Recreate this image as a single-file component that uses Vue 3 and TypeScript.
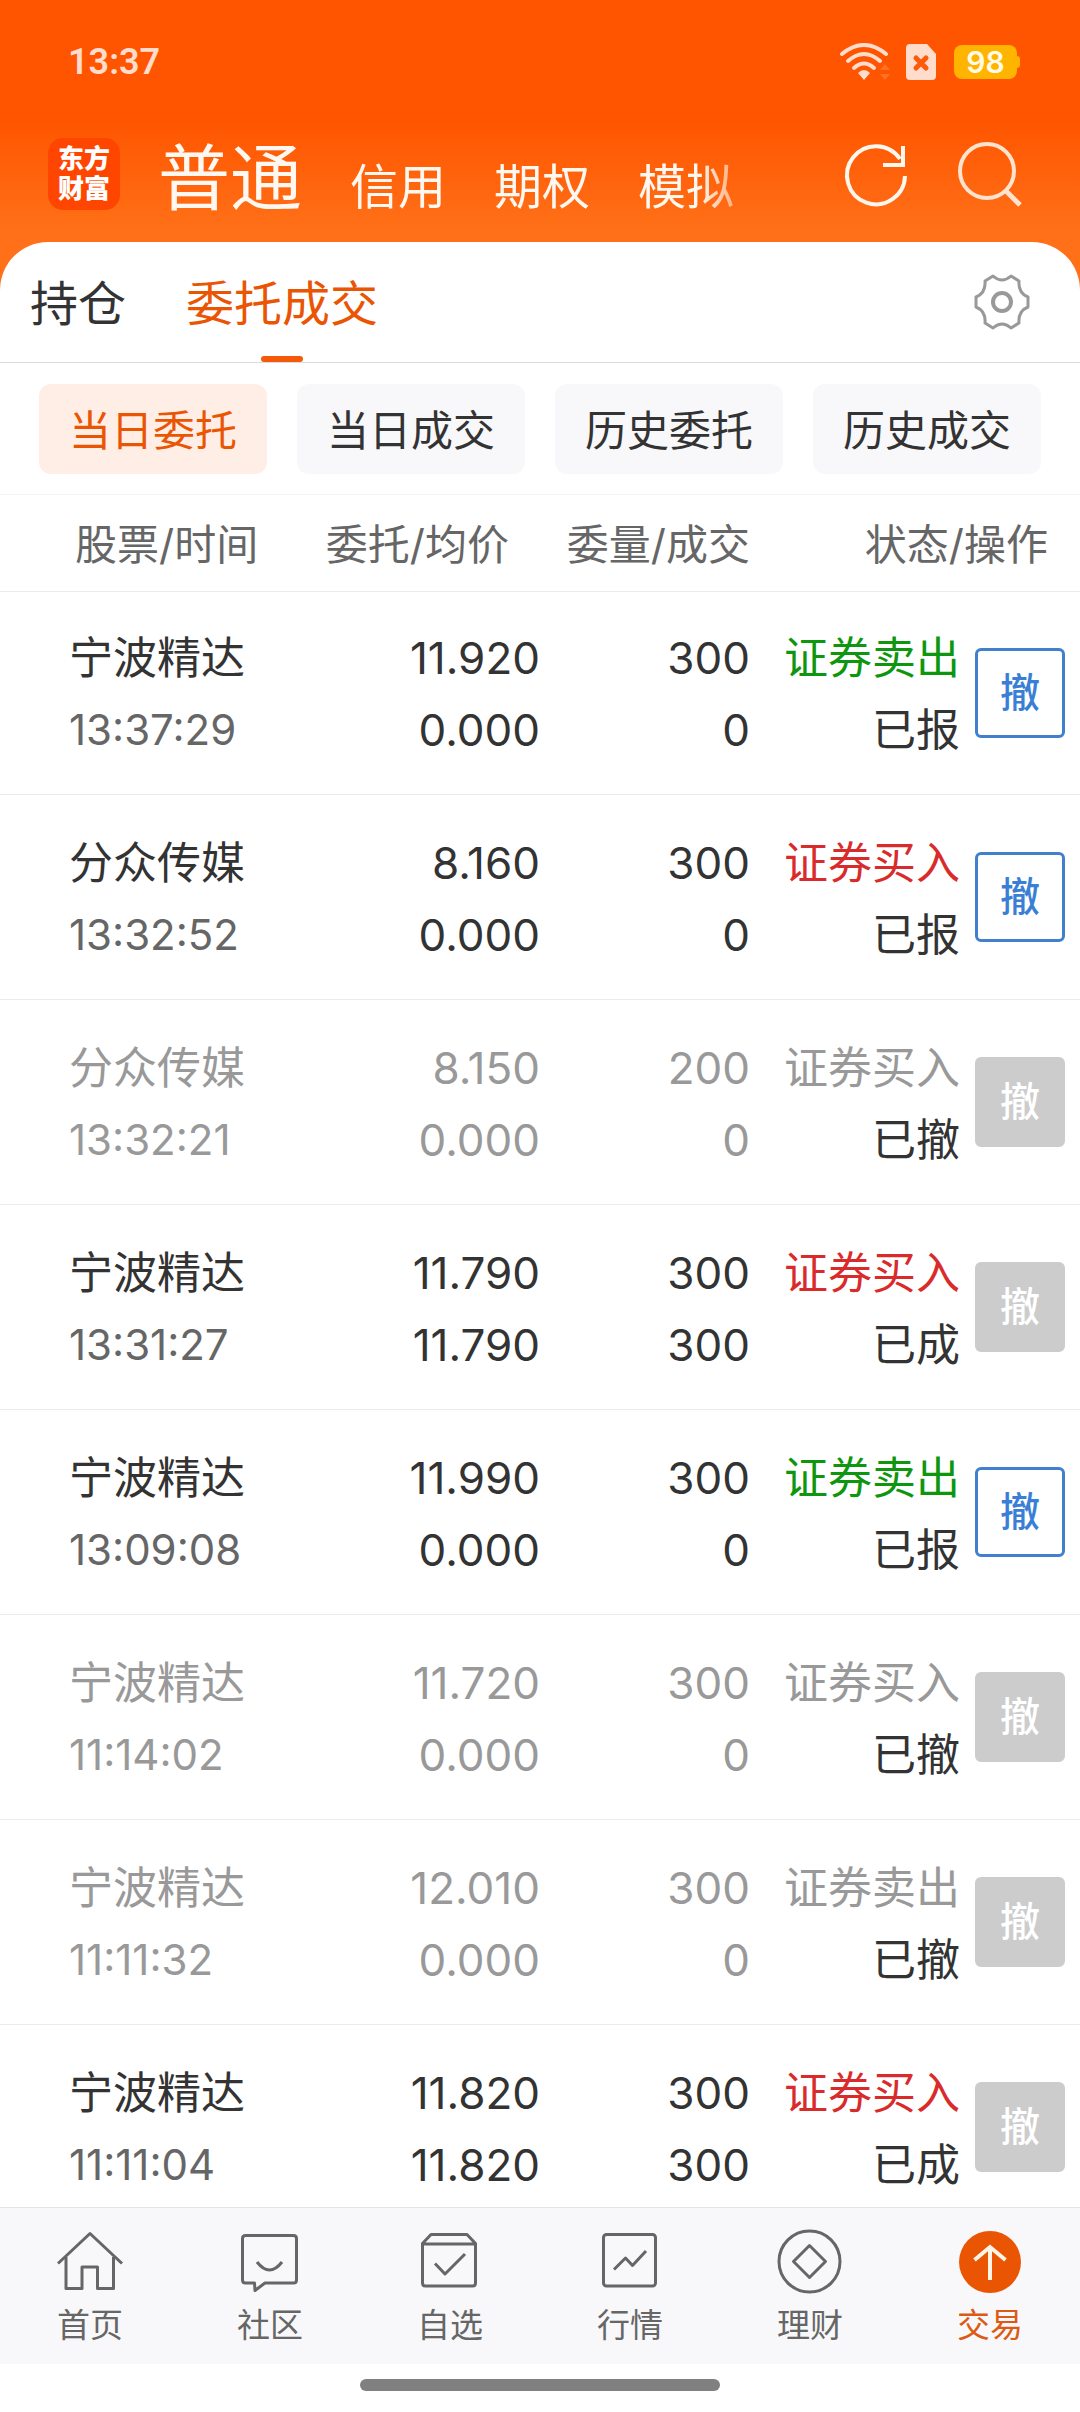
<script setup lang="ts">
import { ref } from 'vue'

type Side = 'buy' | 'sell'
type State = '已报' | '已撤' | '已成'

interface Order {
  name: string
  time: string
  price: string
  average: string
  amount: number
  filled: number
  side: Side
  state: State
}

const modes = ['普通', '信用', '期权', '模拟']
const tabs = ['持仓', '委托成交']
const filters = ['当日委托', '当日成交', '历史委托', '历史成交']
const navItems = [
  { id: 'home', label: '首页' },
  { id: 'community', label: '社区' },
  { id: 'watch', label: '自选' },
  { id: 'market', label: '行情' },
  { id: 'wealth', label: '理财' },
  { id: 'trade', label: '交易' },
]

const mode = ref('普通')
const tab = ref('委托成交')
const filter = ref('当日委托')
const page = ref('trade')

const orders: Order[] = [
  { name: '宁波精达', time: '13:37:29', price: '11.920', average: '0.000', amount: 300, filled: 0, side: 'sell', state: '已报' },
  { name: '分众传媒', time: '13:32:52', price: '8.160', average: '0.000', amount: 300, filled: 0, side: 'buy', state: '已报' },
  { name: '分众传媒', time: '13:32:21', price: '8.150', average: '0.000', amount: 200, filled: 0, side: 'buy', state: '已撤' },
  { name: '宁波精达', time: '13:31:27', price: '11.790', average: '11.790', amount: 300, filled: 300, side: 'buy', state: '已成' },
  { name: '宁波精达', time: '13:09:08', price: '11.990', average: '0.000', amount: 300, filled: 0, side: 'sell', state: '已报' },
  { name: '宁波精达', time: '11:14:02', price: '11.720', average: '0.000', amount: 300, filled: 0, side: 'buy', state: '已撤' },
  { name: '宁波精达', time: '11:11:32', price: '12.010', average: '0.000', amount: 300, filled: 0, side: 'sell', state: '已撤' },
  { name: '宁波精达', time: '11:11:04', price: '11.820', average: '11.820', amount: 300, filled: 300, side: 'buy', state: '已成' },
]
</script>

<template>
  <div class="app">
    <header class="top">
      <div class="status">
        <span class="clock">13:37</span>
        <div class="signals">
          <svg class="wifi" width="52" height="38" viewBox="0 0 52 38" aria-hidden="true">
            <g fill="none" stroke="#ffdccb" stroke-width="4" stroke-linecap="round">
              <path d="M3 11Q25 -7 47 11" />
              <path d="M9 18Q25 4 41 18" />
              <path d="M15 25Q25 16 35 25" />
            </g>
            <path d="M25 37L19 30Q25 24 31 30Z" fill="#ffdccb" />
            <path d="M41 27L46 21L51 27ZM41 31L46 37L51 31Z" fill="#ff7226" />
          </svg>
          <svg class="sim" width="30" height="36" viewBox="0 0 30 36" aria-hidden="true">
            <path d="M4 0H21L30 10V32Q30 36 26 36H4Q0 36 0 32V4Q0 0 4 0Z" fill="#ffdccb" />
            <path d="M10 14L20 24M20 14L10 24" stroke="#ff5a0a" stroke-width="5" stroke-linecap="round" />
          </svg>
          <span class="battery">98</span>
        </div>
      </div>
      <div class="bar">
        <div class="logo"><span>东方</span><span>财富</span></div>
        <nav class="modes">
          <button
            v-for="m in modes"
            :key="m"
            type="button"
            class="mode"
            :class="{ active: m === mode }"
            @click="mode = m"
          >{{ m }}</button>
        </nav>
        <button type="button" class="icon-btn" aria-label="刷新">
          <svg width="72" height="72" viewBox="0 0 72 72" fill="none" stroke="#fff6ee" stroke-width="4">
            <path d="M65 38A29 29 0 1 1 60 21" />
            <path d="M63 8V27H43" />
          </svg>
        </button>
        <button type="button" class="icon-btn" aria-label="搜索">
          <svg width="72" height="72" viewBox="0 0 72 72" fill="none" stroke="#ffe3cf" stroke-width="4">
            <circle cx="34" cy="33" r="27" />
            <path d="M52 52L67 67" stroke-width="5" />
          </svg>
        </button>
      </div>
    </header>

    <main class="sheet">
      <div class="tabs">
        <button
          v-for="t in tabs"
          :key="t"
          type="button"
          class="tab"
          :class="{ active: t === tab }"
          @click="tab = t"
        >{{ t }}</button>
        <button type="button" class="settings" aria-label="设置">
          <svg width="60" height="60" viewBox="-30 -30 60 60" fill="none" stroke="#999" stroke-width="3" stroke-linejoin="round">
            <path d="M-9 -26Q0 -18 9 -26L17 -21Q16 -9 26 -5V5Q16 9 17 21L9 26Q0 18 -9 26L-17 21Q-16 9 -26 5V-5Q-16 -9 -17 -21Z" />
            <circle r="9" stroke-width="4" />
          </svg>
        </button>
      </div>

      <div class="filters">
        <button
          v-for="f in filters"
          :key="f"
          type="button"
          class="filter"
          :class="{ active: f === filter }"
          @click="filter = f"
        >{{ f }}</button>
      </div>

      <div class="list">
        <table class="orders">
          <colgroup>
            <col />
            <col class="c-price" />
            <col class="c-amount" />
            <col class="c-state" />
            <col class="c-action" />
          </colgroup>
          <thead>
            <tr>
              <th class="h-name" scope="col">股票/时间</th>
              <th class="h-price" scope="col">委托/均价</th>
              <th scope="col">委量/成交</th>
              <th class="h-state" scope="col" colspan="2">状态/操作</th>
            </tr>
          </thead>
          <tbody>
            <tr v-for="o in orders" :key="o.time" :class="{ cancelled: o.state === '已撤' }">
              <td class="name">
                <div>{{ o.name }}</div>
                <div class="time">{{ o.time }}</div>
              </td>
              <td class="num">
                <div>{{ o.price }}</div>
                <div>{{ o.average }}</div>
              </td>
              <td class="num">
                <div>{{ o.amount }}</div>
                <div>{{ o.filled }}</div>
              </td>
              <td class="state">
                <div :class="o.side">{{ o.side === 'buy' ? '证券买入' : '证券卖出' }}</div>
                <div class="result">{{ o.state }}</div>
              </td>
              <td class="action">
                <button type="button" class="cancel" :disabled="o.state !== '已报'">撤</button>
              </td>
            </tr>
          </tbody>
        </table>
      </div>
    </main>

    <nav class="bottom">
      <a
        v-for="n in navItems"
        :key="n.id"
        :href="'#' + n.id"
        class="nav-item"
        :class="{ active: n.id === page }"
        @click="page = n.id"
      >
        <svg width="72" height="72" viewBox="0 0 72 72" fill="none" stroke="currentColor" stroke-width="3" stroke-linejoin="round">
          <template v-if="n.id === 'home'">
            <path d="M4 37.500L36 7.500L68 37.500" />
            <path d="M12 31V62.500H28V41H43.500V62.500H59.500V31" />
          </template>
          <template v-else-if="n.id === 'community'">
            <path d="M11.500 9.500H59.500Q62.500 9.500 62.500 12.500V54Q62.500 57 59.500 57H31L21 64.500L20.500 57H11.500Q8.500 57 8.500 54V12.500Q8.500 9.500 11.500 9.500Z" />
            <path d="M23 36Q35.500 52 48 36" />
          </template>
          <template v-else-if="n.id === 'watch'">
            <path d="M8.500 17.500L17 8.500H53L61.500 17.500V57Q61.500 60 58.500 60H11.500Q8.500 60 8.500 57ZM8.500 18H61.500" />
            <path d="M21 37.500L31 48L51 28" />
          </template>
          <template v-else-if="n.id === 'market'">
            <rect x="9.500" y="8.500" width="52" height="51.500" rx="3" />
            <path d="M20 43.500L31.500 32L38.500 39.500L52 25" />
          </template>
          <template v-else-if="n.id === 'wealth'">
            <circle cx="35.500" cy="35.500" r="30.500" />
            <path d="M35.500 19.500L51.500 35.500L35.500 51.500L19.500 35.500Z" />
          </template>
          <template v-else>
            <circle cx="36" cy="36" r="31" fill="#ea5504" stroke="none" />
            <path d="M36 54V21M20.500 34L36 21L51.500 34" stroke="#fff4e6" stroke-width="4" stroke-linejoin="miter" />
          </template>
        </svg>
        <span>{{ n.label }}</span>
      </a>
    </nav>
    <div class="gesture"><span></span></div>
  </div>
</template>

<style>
body {
  margin: 0;
  background: #fff;
}
</style>

<style scoped>
.app {
  display: flex;
  flex-direction: column;
  height: 100vh;
  overflow: hidden;
  color: #333;
  background: #fff;
  font-family: Inter, "Noto Sans CJK SC", sans-serif;
}

button {
  padding: 0;
  border: 0;
  background: none;
  color: inherit;
  font: inherit;
  white-space: nowrap;
}

svg {
  display: block;
}

/* Orange header */
.top {
  padding-bottom: 48px;
  background: linear-gradient(#ff5500 0, #ff5500 120px, #ff7018 230px);
}

.status {
  display: flex;
  align-items: center;
  justify-content: space-between;
  height: 124px;
  padding: 0 63px 0 68px;
}

.clock {
  color: #ffdccb;
  font: 600 36px/44px Roboto, sans-serif;
}

.signals {
  display: flex;
  align-items: center;
}

.sim {
  margin: 0 18px 0 15px;
}

.battery {
  position: relative;
  width: 63px;
  border-radius: 8px;
  background: #ffb400;
  color: #fffbe8;
  font: 600 30px/34px Inter, sans-serif;
  text-align: center;
}

.battery::after {
  content: "";
  position: absolute;
  top: 11px;
  left: 100%;
  width: 3px;
  height: 12px;
  border-radius: 0 3px 3px 0;
  background: #ffb400;
}

.bar {
  display: flex;
  align-items: center;
  gap: 38px;
  height: 100px;
  margin-bottom: 18px;
  padding: 0 55px 0 48px;
}

.logo {
  display: flex;
  flex-direction: column;
  align-items: center;
  justify-content: center;
  flex: none;
  width: 72px;
  height: 72px;
  border-radius: 15px;
  background: #ff4600;
  color: #fff;
  font-size: 26px;
  font-weight: 900;
  line-height: 30px;
}

.modes {
  display: flex;
  flex: 1;
  align-items: baseline;
  gap: 48px;
  min-width: 0;
  padding-top: 16px;
  overflow: hidden;
  color: #fff8f0;
  -webkit-mask-image: linear-gradient(90deg, #000 540px, transparent 612px);
  mask-image: linear-gradient(90deg, #000 540px, transparent 612px);
}

.mode {
  font-size: 48px;
  line-height: 96px;
}

.mode.active {
  font-size: 72px;
}

.icon-btn {
  flex: none;
}

.icon-btn + .icon-btn {
  margin-left: 3px;
}

/* White sheet */
.sheet {
  display: flex;
  flex: 1;
  flex-direction: column;
  min-height: 0;
  margin-top: -48px;
  border-radius: 48px 48px 0 0;
  background: #fff;
}

.tabs {
  display: flex;
  flex: none;
  gap: 60px;
  height: 120px;
  padding: 0 48px 0 30px;
  border-bottom: 1px solid #dcdcdc;
}

.tab {
  position: relative;
  padding-bottom: 4px;
  font-size: 48px;
}

.tab.active {
  color: #ea5504;
}

.tab.active::after {
  content: "";
  position: absolute;
  bottom: 0;
  left: 50%;
  width: 42px;
  height: 6px;
  margin-left: -21px;
  border-radius: 3px;
  background: #f55a0a;
}

.settings {
  margin-left: auto;
}

.filters {
  display: flex;
  flex: none;
  gap: 30px;
  padding: 21px 39px 20px;
  border-bottom: 1px solid #f5f5f5;
}

.filter {
  flex: 1;
  height: 90px;
  padding-bottom: 4px;
  border-radius: 12px;
  background: #f8f8fa;
  font-size: 42px;
}

.filter.active {
  background: #ffeee6;
  color: #ea5504;
}

.list {
  flex: 1;
  min-height: 0;
  overflow-y: auto;
  scrollbar-width: none;
}

.orders {
  width: 100%;
  table-layout: fixed;
  border-collapse: separate;
  border-spacing: 0;
}

.c-price {
  width: 240px;
}

.c-amount,
.c-state {
  width: 210px;
}

.c-action {
  width: 120px;
}

th {
  height: 92px;
  padding: 0 0 4px;
  border-bottom: 1px solid #ebebeb;
  color: #666;
  font-size: 42px;
  font-weight: 400;
  text-align: right;
  white-space: nowrap;
}

.h-name {
  padding-left: 75px;
  text-align: left;
}

.h-price {
  padding-right: 31px;
}

.h-state {
  padding-right: 32px;
}

td {
  padding: 32px 0 28px;
  border-bottom: 1px solid #ebebeb;
  font-size: 44px;
  line-height: 72px;
  text-align: right;
  white-space: nowrap;
}

tbody tr:first-child td {
  padding-top: 30px;
}

.name {
  padding-left: 69px;
  text-align: left;
}

.time {
  color: #666;
  font-size: 42px;
}

.buy {
  color: #d92b2b;
}

.sell {
  color: #0f960f;
}

.cancelled td,
.cancelled td div {
  color: #999;
}

.cancelled td .result {
  color: #333;
}

tbody tr td.action {
  padding: 0 15px 0 0;
}

.cancel {
  width: 90px;
  height: 90px;
  border: 3px solid #4080cc;
  border-radius: 6px;
  color: #3a7fd5;
  font-size: 40px;
  font-weight: 500;
  line-height: 84px;
  vertical-align: middle;
}

.cancel:disabled {
  border-color: #ccc;
  background: #ccc;
  color: #fff;
}

/* Bottom navigation */
.bottom {
  display: flex;
  flex: none;
  border-top: 1px solid #e4e4e6;
  background: #f8f8fa;
}

.nav-item {
  display: flex;
  flex: 1;
  flex-direction: column;
  align-items: center;
  gap: 7px;
  padding: 18px 0 19px;
  color: #666;
  font-size: 33px;
  line-height: 40px;
  text-decoration: none;
}

.nav-item.active {
  color: #dc5a14;
}

.gesture {
  display: flex;
  flex: none;
  justify-content: center;
  padding: 15px 0 21px;
}

.gesture span {
  width: 33.333%;
  height: 12px;
  border-radius: 6px;
  background: #808080;
}
</style>
